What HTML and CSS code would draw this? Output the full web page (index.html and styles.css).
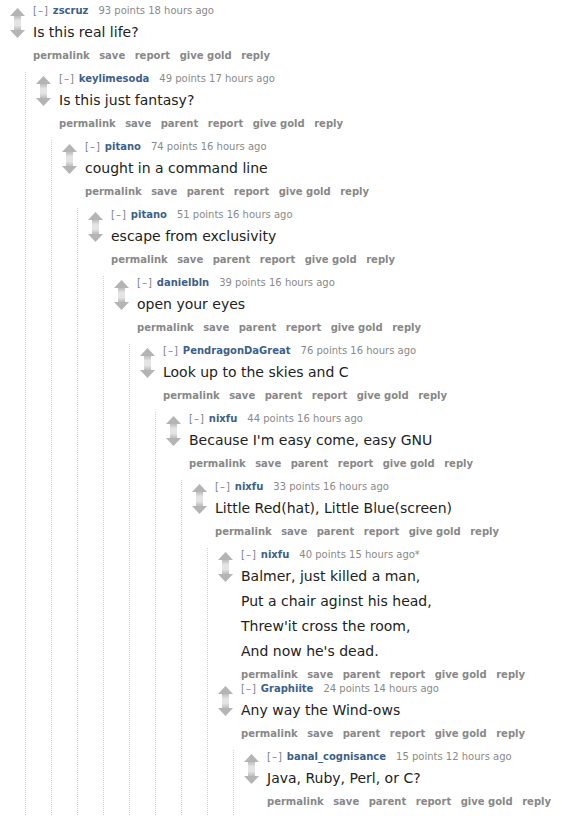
FILE: index.html
```html
<!DOCTYPE html>
<html>
<head>
<meta charset="utf-8">
<link rel="stylesheet" href="styles.css">
</head>
<body>
<svg class="defs" width="0" height="0" aria-hidden="true"><defs><linearGradient id="g" x1="0" y1="0" x2="0" y2="1"><stop offset="0" stop-color="#b4b4b4"/><stop offset="0.35" stop-color="#e4e4e4"/><stop offset="0.65" stop-color="#e4e4e4"/><stop offset="1" stop-color="#b4b4b4"/></linearGradient></defs></svg>
<div class="thread">
  <div class="comment">
    <div class="row">
      <div class="midcol"><svg class="arrows" viewBox="0 0 15 30" width="15" height="30"><rect x="4" y="7" width="7" height="16" fill="url(#g)"/><path d="M7.5 0 L15 8 L0 8 Z" fill="#b4b4b4"/><path d="M0 22 L15 22 L7.5 30 Z" fill="#b4b4b4"/></svg></div>
      <div class="entry">
        <p class="tagline"><span class="expand">[–]</span><span class="author">zscruz</span><span class="score">93 points 18 hours ago</span></p>
        <div class="md"><p>Is this real life?</p></div>
        <ul class="buttons"><li>permalink</li><li>save</li><li>report</li><li>give gold</li><li>reply</li></ul>
      </div>
    </div>
    <div class="child">
      <div class="comment">
        <div class="row">
          <div class="midcol"><svg class="arrows" viewBox="0 0 15 30" width="15" height="30"><rect x="4" y="7" width="7" height="16" fill="url(#g)"/><path d="M7.5 0 L15 8 L0 8 Z" fill="#b4b4b4"/><path d="M0 22 L15 22 L7.5 30 Z" fill="#b4b4b4"/></svg></div>
          <div class="entry">
            <p class="tagline"><span class="expand">[–]</span><span class="author">keylimesoda</span><span class="score">49 points 17 hours ago</span></p>
            <div class="md"><p>Is this just fantasy?</p></div>
            <ul class="buttons"><li>permalink</li><li>save</li><li>parent</li><li>report</li><li>give gold</li><li>reply</li></ul>
          </div>
        </div>
        <div class="child">
          <div class="comment">
            <div class="row">
              <div class="midcol"><svg class="arrows" viewBox="0 0 15 30" width="15" height="30"><rect x="4" y="7" width="7" height="16" fill="url(#g)"/><path d="M7.5 0 L15 8 L0 8 Z" fill="#b4b4b4"/><path d="M0 22 L15 22 L7.5 30 Z" fill="#b4b4b4"/></svg></div>
              <div class="entry">
                <p class="tagline"><span class="expand">[–]</span><span class="author">pitano</span><span class="score">74 points 16 hours ago</span></p>
                <div class="md"><p>cought in a command line</p></div>
                <ul class="buttons"><li>permalink</li><li>save</li><li>parent</li><li>report</li><li>give gold</li><li>reply</li></ul>
              </div>
            </div>
            <div class="child">
              <div class="comment">
                <div class="row">
                  <div class="midcol"><svg class="arrows" viewBox="0 0 15 30" width="15" height="30"><rect x="4" y="7" width="7" height="16" fill="url(#g)"/><path d="M7.5 0 L15 8 L0 8 Z" fill="#b4b4b4"/><path d="M0 22 L15 22 L7.5 30 Z" fill="#b4b4b4"/></svg></div>
                  <div class="entry">
                    <p class="tagline"><span class="expand">[–]</span><span class="author">pitano</span><span class="score">51 points 16 hours ago</span></p>
                    <div class="md"><p>escape from exclusivity</p></div>
                    <ul class="buttons"><li>permalink</li><li>save</li><li>parent</li><li>report</li><li>give gold</li><li>reply</li></ul>
                  </div>
                </div>
                <div class="child">
                  <div class="comment">
                    <div class="row">
                      <div class="midcol"><svg class="arrows" viewBox="0 0 15 30" width="15" height="30"><rect x="4" y="7" width="7" height="16" fill="url(#g)"/><path d="M7.5 0 L15 8 L0 8 Z" fill="#b4b4b4"/><path d="M0 22 L15 22 L7.5 30 Z" fill="#b4b4b4"/></svg></div>
                      <div class="entry">
                        <p class="tagline"><span class="expand">[–]</span><span class="author">danielbln</span><span class="score">39 points 16 hours ago</span></p>
                        <div class="md"><p>open your eyes</p></div>
                        <ul class="buttons"><li>permalink</li><li>save</li><li>parent</li><li>report</li><li>give gold</li><li>reply</li></ul>
                      </div>
                    </div>
                    <div class="child">
                      <div class="comment">
                        <div class="row">
                          <div class="midcol"><svg class="arrows" viewBox="0 0 15 30" width="15" height="30"><rect x="4" y="7" width="7" height="16" fill="url(#g)"/><path d="M7.5 0 L15 8 L0 8 Z" fill="#b4b4b4"/><path d="M0 22 L15 22 L7.5 30 Z" fill="#b4b4b4"/></svg></div>
                          <div class="entry">
                            <p class="tagline"><span class="expand">[–]</span><span class="author">PendragonDaGreat</span><span class="score">76 points 16 hours ago</span></p>
                            <div class="md"><p>Look up to the skies and C</p></div>
                            <ul class="buttons"><li>permalink</li><li>save</li><li>parent</li><li>report</li><li>give gold</li><li>reply</li></ul>
                          </div>
                        </div>
                        <div class="child">
                          <div class="comment">
                            <div class="row">
                              <div class="midcol"><svg class="arrows" viewBox="0 0 15 30" width="15" height="30"><rect x="4" y="7" width="7" height="16" fill="url(#g)"/><path d="M7.5 0 L15 8 L0 8 Z" fill="#b4b4b4"/><path d="M0 22 L15 22 L7.5 30 Z" fill="#b4b4b4"/></svg></div>
                              <div class="entry">
                                <p class="tagline"><span class="expand">[–]</span><span class="author">nixfu</span><span class="score">44 points 16 hours ago</span></p>
                                <div class="md"><p>Because I'm easy come, easy GNU</p></div>
                                <ul class="buttons"><li>permalink</li><li>save</li><li>parent</li><li>report</li><li>give gold</li><li>reply</li></ul>
                              </div>
                            </div>
                            <div class="child">
                              <div class="comment">
                                <div class="row">
                                  <div class="midcol"><svg class="arrows" viewBox="0 0 15 30" width="15" height="30"><rect x="4" y="7" width="7" height="16" fill="url(#g)"/><path d="M7.5 0 L15 8 L0 8 Z" fill="#b4b4b4"/><path d="M0 22 L15 22 L7.5 30 Z" fill="#b4b4b4"/></svg></div>
                                  <div class="entry">
                                    <p class="tagline"><span class="expand">[–]</span><span class="author">nixfu</span><span class="score">33 points 16 hours ago</span></p>
                                    <div class="md"><p>Little Red(hat), Little Blue(screen)</p></div>
                                    <ul class="buttons"><li>permalink</li><li>save</li><li>parent</li><li>report</li><li>give gold</li><li>reply</li></ul>
                                  </div>
                                </div>
                                <div class="child">
                                  <div class="comment">
                                    <div class="row">
                                      <div class="midcol"><svg class="arrows" viewBox="0 0 15 30" width="15" height="30"><rect x="4" y="7" width="7" height="16" fill="url(#g)"/><path d="M7.5 0 L15 8 L0 8 Z" fill="#b4b4b4"/><path d="M0 22 L15 22 L7.5 30 Z" fill="#b4b4b4"/></svg></div>
                                      <div class="entry">
                                        <p class="tagline"><span class="expand">[–]</span><span class="author">nixfu</span><span class="score">40 points 15 hours ago*</span></p>
                                        <div class="md"><p>Balmer, just killed a man,</p><p>Put a chair aginst his head,</p><p>Threw'it cross the room,</p><p>And now he's dead.</p></div>
                                        <ul class="buttons"><li>permalink</li><li>save</li><li>parent</li><li>report</li><li>give gold</li><li>reply</li></ul>
                                      </div>
                                    </div>
                                  </div>
                                  <div class="comment">
                                    <div class="row">
                                      <div class="midcol"><svg class="arrows" viewBox="0 0 15 30" width="15" height="30"><rect x="4" y="7" width="7" height="16" fill="url(#g)"/><path d="M7.5 0 L15 8 L0 8 Z" fill="#b4b4b4"/><path d="M0 22 L15 22 L7.5 30 Z" fill="#b4b4b4"/></svg></div>
                                      <div class="entry">
                                        <p class="tagline"><span class="expand">[–]</span><span class="author">Graphiite</span><span class="score">24 points 14 hours ago</span></p>
                                        <div class="md"><p>Any way the Wind-ows</p></div>
                                        <ul class="buttons"><li>permalink</li><li>save</li><li>parent</li><li>report</li><li>give gold</li><li>reply</li></ul>
                                      </div>
                                    </div>
                                    <div class="child">
                                      <div class="comment last">
                                        <div class="row">
                                          <div class="midcol"><svg class="arrows" viewBox="0 0 15 30" width="15" height="30"><rect x="4" y="7" width="7" height="16" fill="url(#g)"/><path d="M7.5 0 L15 8 L0 8 Z" fill="#b4b4b4"/><path d="M0 22 L15 22 L7.5 30 Z" fill="#b4b4b4"/></svg></div>
                                          <div class="entry">
                                            <p class="tagline"><span class="expand">[–]</span><span class="author">banal_cognisance</span><span class="score">15 points 12 hours ago</span></p>
                                            <div class="md"><p>Java, Ruby, Perl, or C?</p></div>
                                            <ul class="buttons"><li>permalink</li><li>save</li><li>parent</li><li>report</li><li>give gold</li><li>reply</li></ul>
                                          </div>
                                        </div>
                                      </div>
                                    </div>
                                  </div>
                                </div>
                              </div>
                            </div>
                          </div>
                        </div>
                      </div>
                    </div>
                  </div>
                </div>
              </div>
            </div>
          </div>
        </div>
      </div>
    </div>
  </div>
</div>
</body>
</html>
```

FILE: styles.css
```css
html, body {
  margin: 0;
  padding: 0;
  background: #ffffff;
}

body {
  font-family: "DejaVu Sans", Verdana, sans-serif;
  color: #222222;
}

.defs {
  position: absolute;
  width: 0;
  height: 0;
}

.thread {
  padding-top: 4px;
}

.row {
  display: flex;
  align-items: flex-start;
}

.midcol {
  width: 15px;
  margin-left: 10px;
  margin-right: 8px;
  padding-top: 4px;
  flex: none;
}

.arrows {
  display: block;
}

.entry {
  flex: 1;
  min-width: 0;
}

.tagline {
  margin: 0;
  height: 14px;
  line-height: 14px;
  font-size: 10px;
  white-space: nowrap;
}

.expand {
  color: #7a8391;
  letter-spacing: 1px;
  margin-right: 4px;
}

.author {
  color: #3e5f89;
  font-weight: bold;
  margin-right: 10px;
}

.score {
  color: #8a8a8a;
}

.md p {
  margin: 4px 0 0;
  font-size: 14px;
  line-height: 20px;
  color: #222222;
  white-space: nowrap;
}

.md p + p {
  margin-top: 5px;
}

.buttons {
  list-style: none;
  margin: 7px 0 0;
  padding: 0;
  display: flex;
  gap: 9.5px;
  height: 14px;
  line-height: 14px;
  font-size: 10px;
  font-weight: bold;
  color: #888888;
  white-space: nowrap;
}

.child {
  margin-top: 9px;
  margin-left: 25px;
  border-left: 1px dotted #d0d0d0;
}

.comment.last {
  padding-bottom: 10px;
}
```
